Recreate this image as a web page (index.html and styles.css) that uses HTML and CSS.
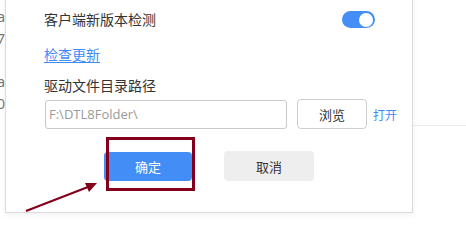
FILE: index.html
```
<!DOCTYPE html>
<html lang="zh-CN">
<head>
  <meta charset="UTF-8">
  <title>设置</title>
  <link rel="stylesheet" href="styles.css">
</head>
<body>

  <div class="page">
    <div class="side">
      <div class="side-item">Data</div>
      <div class="side-item">17</div>
      <div class="side-item gap">Fa</div>
      <div class="side-item">10</div>
    </div>
    <div class="main">
      <div class="main-row"></div>
    </div>
  </div>

  <div class="dialog">
    <div class="row row-switch">
      <span class="label">客户端新版本检测</span>
      <span class="switch"><span class="knob"></span></span>
    </div>

    <a class="link" href="#">检查更新</a>

    <div class="label label-path">驱动文件目录路径</div>

    <div class="row row-path">
      <input type="text" class="path" value="F:\DTL8Folder\" disabled>
      <button class="btn btn-browse">浏览</button>
      <a class="open" href="#">打开</a>
    </div>

    <div class="row row-actions">
      <button class="btn btn-ok">确定</button>
      <button class="btn btn-cancel">取消</button>
    </div>
  </div>

  <div class="mark"></div>
  <svg class="arrow" width="466" height="241" viewBox="0 0 466 241">
    <line x1="26" y1="211" x2="88" y2="187" stroke="#82001c" stroke-width="2.2"/>
    <polygon points="97,183 85,183 89,192" fill="#82001c"/>
  </svg>

</body>
</html>
```

FILE: styles.css
```
* {
  box-sizing: border-box;
  margin: 0;
  padding: 0;
}

body {
  width: 466px;
  height: 241px;
  overflow: hidden;
  position: relative;
  background: #fff;
  font-family: "Noto Sans", "Noto Sans CJK SC", sans-serif;
  color: #333;
}

/* page behind the dialog */
.page {
  display: flex;
  height: 100%;
}

.side {
  margin-left: -40px;
  padding-top: 6px;
  flex: 0 0 45px;
  text-align: right;
  font-size: 14px;
  line-height: 22px;
  color: #777;
}

.side .gap {
  margin-top: 21px;
}

.main {
  flex: 1;
}

.main-row {
  height: 126px;
  border-bottom: 1px solid #ececec;
}

/* dialog */
.dialog {
  position: absolute;
  left: 5px;
  top: -10px;
  width: 408px;
  padding: 17px 0 31px 38px;
  background: #fff;
  border: 1px solid #dcdcdc;
  box-shadow: 0 2px 6px rgba(0, 0, 0, 0.06);
  font-family: "Noto Sans CJK SC", sans-serif;
}

.row {
  display: flex;
  align-items: center;
}

.label {
  font-size: 14px;
  line-height: 22px;
  color: #333;
}

.row-switch {
  width: 331px;
  height: 22px;
  justify-content: space-between;
}

.switch {
  width: 33px;
  height: 17px;
  border-radius: 9px;
  background: #448ef6;
  display: flex;
  justify-content: flex-end;
  align-items: center;
  padding-right: 2px;
  margin-top: 1px;
}

.knob {
  width: 14px;
  height: 14px;
  border-radius: 50%;
  background: #fff;
}

.link {
  display: inline-block;
  margin-top: 14px;
  font-size: 14px;
  line-height: 20px;
  color: #3f8bf6;
  text-decoration: underline;
  text-underline-offset: 2px;
}

.label-path {
  margin-top: 10px;
  line-height: 20px;
}

.row-path {
  margin-top: 4px;
  height: 30px;
}

.path {
  width: 242px;
  height: 29px;
  margin-left: 1px;
  padding: 0 3px;
  border: 1px solid #c9c9c9;
  border-radius: 3px;
  background: #fff;
  font-family: "Open Sans", sans-serif;
  font-size: 13px;
  color: #9a9a9a;
  outline: none;
}

.btn {
  border: none;
  border-radius: 4px;
  font-family: "Noto Sans CJK SC", sans-serif;
  font-size: 13px;
  cursor: pointer;
}

.btn-browse {
  width: 70px;
  height: 30px;
  margin-left: 10px;
  border: 1px solid #cfcfcf;
  background: #fff;
  color: #333;
}

.open {
  margin-left: 6px;
  font-size: 12px;
  color: #3f8bf6;
  text-decoration: none;
}

.row-actions {
  margin-top: 22px;
  justify-content: center;
  gap: 32px;
  padding-right: 38px;
}

.btn-ok {
  width: 88px;
  height: 29px;
  background: #438ef6;
  color: #fff;
}

.btn-cancel {
  width: 90px;
  height: 30px;
  background: #eeeeee;
  color: #333;
}

/* annotation overlay */
.mark {
  position: absolute;
  left: 106px;
  top: 137px;
  width: 89px;
  height: 54px;
  border: 3px solid #82001c;
}

.arrow {
  position: absolute;
  left: 0;
  top: 0;
}
```
